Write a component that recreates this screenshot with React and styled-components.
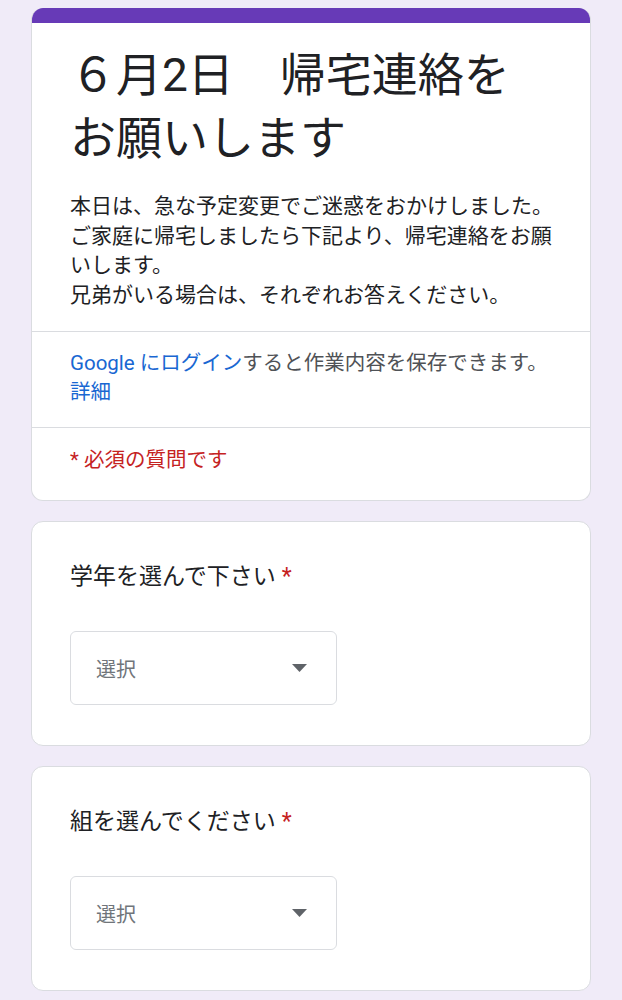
import React from "react";
import styled, { createGlobalStyle } from "styled-components";

const GlobalStyle = createGlobalStyle`
  html, body { margin: 0; padding: 0; background: #f0ebf8; }
  body { font-family: Roboto, "Noto Sans CJK JP", sans-serif; color: #202124; }
`;

const Page = styled.main`
  width: 560px;
  margin: 0 auto;
  padding: 8px 0 20px;
  display: flex;
  flex-direction: column;
  gap: 20px;
`;

const Card = styled.section`
  background: #fff;
  border: 1px solid #dadce0;
  border-top-width: ${(p) => (p.$accent ? 0 : 1)}px;
  border-radius: 12px;
  overflow: hidden;
  display: flex;
  flex-direction: column;
`;

const Accent = styled.div`
  height: 15px;
  background: #673ab7;
`;

const Section = styled.div`
  padding: ${(p) => p.$pad || "0"};
  padding-left: 38px;
  padding-right: 36px;
  & + & { border-top: 1px solid #dadce0; }
`;

const Title = styled.h1`
  margin: 0;
  max-width: 470px;
  font-size: 46px;
  font-weight: 400;
  line-height: 63px;
  color: #202124;
`;

const Description = styled.p`
  margin: 22px 0 0;
  font-size: 21px;
  line-height: 29.5px;
  color: #202124;
`;

const Note = styled.p`
  margin: 0;
  font-size: 20.5px;
  line-height: 29px;
  color: ${(p) => p.$color || "#4f5256"};
`;

const Link = styled.a`
  color: #1967d2;
  text-decoration: none;
`;

const QuestionBody = styled.div`
  padding: 38px 36px 40px 38px;
  display: flex;
  flex-direction: column;
  gap: 37px;
  align-items: flex-start;
`;

const QuestionTitle = styled.div`
  font-size: 23px;
  line-height: 34px;
  color: #202124;
`;

const Star = styled.span`
  color: #c5221f;
  margin-left: 6px;
`;

const Select = styled.div`
  box-sizing: border-box;
  width: 267px;
  height: 74px;
  border: 1px solid #dadce0;
  border-radius: 6px;
  display: flex;
  align-items: center;
  justify-content: space-between;
  padding: 0 29px 0 25px;
`;

const Placeholder = styled.span`
  font-size: 20px;
  color: #70757a;
`;

const Arrow = () => (
  <svg width="15" height="8" viewBox="0 0 15 8" aria-hidden="true">
    <path d="M0 0 L15 0 L7.5 8 Z" fill="#5f6368" />
  </svg>
);

const Question = ({ label }) => (
  <Card>
    <QuestionBody>
      <QuestionTitle>
        {label}
        <Star>*</Star>
      </QuestionTitle>
      <Select>
        <Placeholder>選択</Placeholder>
        <Arrow />
      </Select>
    </QuestionBody>
  </Card>
);

export default function App() {
  return (
    <>
      <GlobalStyle />
      <Page>
        <Card $accent>
          <Accent />
          <Section $pad="21px 0 21px">
            <Title>６月2日　帰宅連絡をお願いします</Title>
            <Description>
              本日は、急な予定変更でご迷惑をおかけしました。
              <br />
              ご家庭に帰宅しましたら下記より、帰宅連絡をお願いします。
              <br />
              兄弟がいる場合は、それぞれお答えください。
            </Description>
          </Section>
          <Section $pad="17px 0 20px">
            <Note>
              <Link href="#">Google にログイン</Link>すると作業内容を保存できます。
              <br />
              <Link href="#">詳細</Link>
            </Note>
          </Section>
          <Section $pad="18px 0 25px">
            <Note $color="#c5221f">* 必須の質問です</Note>
          </Section>
        </Card>
        <Question label="学年を選んで下さい" />
        <Question label="組を選んでください" />
      </Page>
    </>
  );
}
